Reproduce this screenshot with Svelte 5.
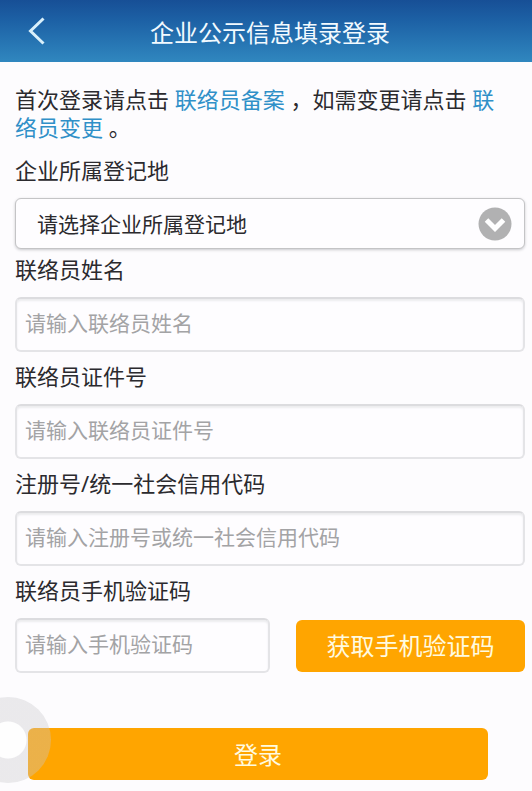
<script>
  let region = $state('');
  let contact = $state({ name: '', idNumber: '', creditCode: '' });
  let smsCode = $state('');

  const fields = [
    { key: 'name', label: '联络员姓名', placeholder: '请输入联络员姓名' },
    { key: 'idNumber', label: '联络员证件号', placeholder: '请输入联络员证件号' },
    { key: 'creditCode', label: '注册号/统一社会信用代码', placeholder: '请输入注册号或统一社会信用代码' }
  ];

  const onSubmit = (e) => {
    e.preventDefault();
  };
</script>

<header>
  <button class="back" type="button" aria-label="返回">
    <svg viewBox="0 0 18 28" width="18" height="28">
      <path d="M15.5 1.5 2.5 14l13 12.5" />
    </svg>
  </button>
  <h1>企业公示信息填录登录</h1>
</header>

<main>
  <p class="intro">
    首次登录请点击 <a href="#register">联络员备案</a> ，如需变更请点击 <a href="#change">联络员变更</a> 。
  </p>

  <form onsubmit={onSubmit}>
    <div class="field region">
      <label for="region">企业所属登记地</label>
      <div class="select">
        <select id="region" bind:value={region}>
          <option value="">请选择企业所属登记地</option>
        </select>
        <svg viewBox="0 0 34 34" width="34" height="34" aria-hidden="true">
          <circle cx="17" cy="17" r="16.5" />
          <path d="M8.5 13 17 21.5 25.5 13" />
        </svg>
      </div>
    </div>

    {#each fields as field (field.key)}
      <div class="field">
        <label for={field.key}>{field.label}</label>
        <input id={field.key} type="text" placeholder={field.placeholder} bind:value={contact[field.key]} />
      </div>
    {/each}

    <div class="field">
      <label for="smsCode">联络员手机验证码</label>
      <div class="code-row">
        <input id="smsCode" type="text" placeholder="请输入手机验证码" bind:value={smsCode} />
        <button class="primary" type="button">获取手机验证码</button>
      </div>
    </div>

    <div class="submit">
      <button class="primary" type="submit">登录</button>
    </div>
  </form>
</main>

<button class="float" type="button" aria-label="快捷菜单"></button>

<style>
  :global(body) {
    margin: 0;
    background: #fdfcfe;
    color: #2b2a2e;
    font-family: "Noto Sans", "Noto Sans CJK SC", sans-serif;
    overflow-x: hidden;
  }

  header {
    display: grid;
    grid-template-columns: 76px 1fr 68px;
    align-items: center;
    height: 62px;
    background: linear-gradient(#174f96, #1d62a6 35%, #3087bf);
  }

  h1 {
    margin: 0;
    padding-top: 4px;
    color: #f2faff;
    font-size: 24px;
    font-weight: 400;
    line-height: 32px;
    text-align: center;
    white-space: nowrap;
  }

  button {
    padding: 0;
    border: 0;
    font-family: inherit;
    cursor: pointer;
  }

  .back {
    display: flex;
    align-items: center;
    height: 62px;
    padding-left: 28px;
    background: none;
  }

  .back path {
    fill: none;
    stroke: #d9f0fb;
    stroke-width: 3;
  }

  main {
    padding: 23px 7px 11px 15px;
  }

  .intro {
    margin: 0 0 15px;
    padding-right: 12px;
    font-size: 22px;
    line-height: 28px;
  }

  a {
    color: #3090c8;
    text-decoration: none;
  }

  .field {
    margin-bottom: 10px;
  }

  .region {
    margin-bottom: 6px;
  }

  label {
    display: block;
    margin-bottom: 14px;
    font-size: 22px;
    line-height: 28px;
  }

  input,
  select {
    box-sizing: border-box;
    width: 100%;
    border-radius: 6px;
    background: #fefdff;
    color: inherit;
    font-family: inherit;
    font-size: 21px;
    outline: 0;
  }

  input {
    display: block;
    height: 55px;
    padding: 0 8px 3px;
    border: 2px solid #e4e4e7;
    border-top-color: #dcdcdf;
    box-shadow: inset 0 2px 2px #ececef;
  }

  input::placeholder {
    color: #a3a3a5;
    opacity: 1;
  }

  .select {
    display: grid;
    align-items: center;
  }

  .select > * {
    grid-area: 1 / 1;
  }

  select {
    height: 51px;
    padding: 0 60px 0 21px;
    border: 1px solid #c4c4c6;
    box-shadow: 0 1px 3px #c8c8cc;
    appearance: none;
  }

  .select svg {
    justify-self: end;
    margin-right: 13px;
    pointer-events: none;
  }

  .select circle {
    fill: #b1b1b2;
  }

  .select path {
    fill: none;
    stroke: #fff;
    stroke-width: 5;
  }

  .code-row {
    display: grid;
    grid-template-columns: 255fr 229fr;
    gap: 26px;
    align-items: center;
  }

  .primary {
    width: 100%;
    height: 52px;
    padding-bottom: 2px;
    border-radius: 6px;
    background: #ffa500;
    color: #fffbe0;
    font-size: 24px;
    font-weight: 400;
  }

  .submit {
    margin-top: 55px;
    padding: 0 37px 0 13px;
  }

  /* half-hidden assistive button docked to the left edge */
  .float {
    position: fixed;
    bottom: 8px;
    left: -35px;
    width: 86px;
    height: 86px;
    border-radius: 50%;
    background: radial-gradient(circle, #fefefe 18px, rgba(200, 200, 204, 0.36) 19px);
  }
</style>
